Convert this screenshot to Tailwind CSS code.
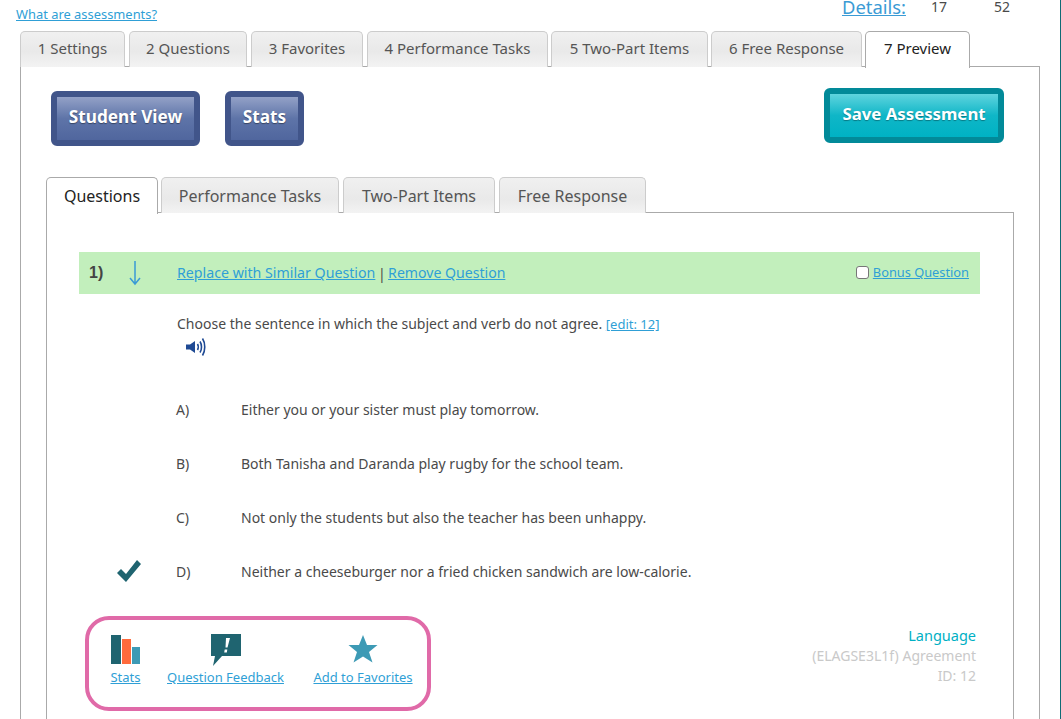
<!DOCTYPE html>
<html><head><meta charset="utf-8"><script src="https://cdn.jsdelivr.net/npm/@tailwindcss/browser@4"></script></head>
<body class="bg-white">
<div class="w-[1061px] h-[719px] overflow-hidden border-r border-[#0f6b75] font-['Noto_Sans',sans-serif] text-[#4a4a4a] text-[14px]">
  <div class="h-[31px] pl-4 pr-[50px] flex justify-between relative">
    <a class="text-[#2f9fd6] underline text-[12.9px] leading-none mt-[8px]">What are assessments?</a>
    <div class="flex items-start -mt-[3px] leading-[20px]">
      <a class="text-[#3a9bd5] underline text-[18.4px] leading-[20px]">Details:</a>
      <span class="ml-[25px] w-[63px]">17</span><span>52</span>
    </div>
  </div>
  <div class="ml-5 w-[1020px] relative">
    <div class="flex h-[36px] relative z-10 text-[15px] text-[#555]">
      <div class="w-[105px] pb-[3px] h-[36px] rounded-t-[5px] border border-b-0 border-[#ccc] bg-[linear-gradient(#f0f0f0,#e9e9e9_55%,#f3f3f3)] flex items-center justify-center">1 Settings</div>
      <div class="ml-[4px] w-[118px] pb-[3px] h-[36px] rounded-t-[5px] border border-b-0 border-[#ccc] bg-[linear-gradient(#f0f0f0,#e9e9e9_55%,#f3f3f3)] flex items-center justify-center">2 Questions</div>
      <div class="ml-[4px] w-[112px] pb-[3px] h-[36px] rounded-t-[5px] border border-b-0 border-[#ccc] bg-[linear-gradient(#f0f0f0,#e9e9e9_55%,#f3f3f3)] flex items-center justify-center">3 Favorites</div>
      <div class="ml-[4px] w-[181px] pb-[3px] h-[36px] rounded-t-[5px] border border-b-0 border-[#ccc] bg-[linear-gradient(#f0f0f0,#e9e9e9_55%,#f3f3f3)] flex items-center justify-center">4 Performance Tasks</div>
      <div class="ml-[3px] w-[157px] pb-[3px] h-[36px] rounded-t-[5px] border border-b-0 border-[#ccc] bg-[linear-gradient(#f0f0f0,#e9e9e9_55%,#f3f3f3)] flex items-center justify-center">5 Two-Part Items</div>
      <div class="ml-[3px] w-[151px] pb-[3px] h-[36px] rounded-t-[5px] border border-b-0 border-[#ccc] bg-[linear-gradient(#f0f0f0,#e9e9e9_55%,#f3f3f3)] flex items-center justify-center">6 Free Response</div>
      <div class="ml-[3px] w-[105px] h-[37px] pb-[4px] rounded-t-[5px] border border-b-0 border-[#aaa] bg-white text-[#222] flex items-center justify-center">7 Preview</div>
    </div>
    <div class="-mt-px border border-[#aaa] border-b-0 h-[700px] pl-[25px] pr-[25px]">
      <div class="flex justify-between items-start h-[110px]">
        <div class="flex gap-[25px] mt-[24px] ml-[5px]">
          <div class="w-[149px] h-[55px] pb-[4px] rounded-[6px] border-[6px] border-[#41558a] bg-[linear-gradient(#93a1c7,#5e74a8_50%,#50669e)] text-white font-bold text-[17.2px] flex items-center justify-center [text-shadow:0_1px_1px_#0006]">Student View</div>
          <div class="w-[79px] h-[55px] pb-[4px] rounded-[6px] border-[6px] border-[#41558a] bg-[linear-gradient(#93a1c7,#5e74a8_50%,#50669e)] text-white font-bold text-[17.2px] flex items-center justify-center [text-shadow:0_1px_1px_#0006]">Stats</div>
        </div>
        <div class="mt-[21px] mr-[10px] w-[180px] h-[55px] pb-[4px] rounded-[6px] border-[6px] border-[#028a99] bg-[linear-gradient(#5fd4de,#0fb6c7_50%,#00b2c4)] text-white font-bold text-[16.8px] flex items-center justify-center [text-shadow:0_1px_1px_#0005]">Save Assessment</div>
      </div>
      <div class="flex h-[36px] relative z-10 text-[16px] text-[#555]">
        <div class="w-[112px] h-[37px] rounded-t-[5px] border border-b-0 border-[#aaa] bg-white text-[#222] flex items-center justify-center">Questions</div>
        <div class="ml-[3px] w-[178px] h-[36px] rounded-t-[5px] border border-b-0 border-[#ccc] bg-[linear-gradient(#f0f0f0,#e9e9e9_60%,#f3f3f3)] flex items-center justify-center">Performance Tasks</div>
        <div class="ml-[4px] w-[152px] h-[36px] rounded-t-[5px] border border-b-0 border-[#ccc] bg-[linear-gradient(#f0f0f0,#e9e9e9_60%,#f3f3f3)] flex items-center justify-center">Two-Part Items</div>
        <div class="ml-[4px] w-[147px] h-[36px] rounded-t-[5px] border border-b-0 border-[#ccc] bg-[linear-gradient(#f0f0f0,#e9e9e9_60%,#f3f3f3)] flex items-center justify-center">Free Response</div>
      </div>
      <div class="-mt-px border border-[#aaa] border-b-0 h-[600px] pt-[39px] pl-[32px] w-[968px]">
        <div class="w-[901px] h-[42px] bg-[#c2efbc] flex items-center">
          <span class="w-[50px] pl-[10px] font-bold text-[#444] text-[16px] font-['Liberation_Sans',sans-serif]">1)</span>
          <svg class="w-[14px] h-[26px] mr-[34px]" viewBox="0 0 14 26" fill="none" stroke="#3a9bd5" stroke-width="1.5"><path d="M6 1V24M1 18L6 24L11 18"/></svg>
          <a class="text-[#2f9fd6] underline text-[14.2px]">Replace with Similar Question</a>
          <span class="mx-[2.5px]">|</span>
          <a class="text-[#2f9fd6] underline text-[14.1px]">Remove Question</a>
          <div class="ml-auto mr-[11px] flex items-center gap-[4px]">
            <span class="w-[13px] h-[13px] bg-white border border-[#777] rounded-[3px] -mt-[2px]"></span>
            <a class="text-[#2f9fd6] underline text-[12.8px]">Bonus Question</a>
          </div>
        </div>
        <div class="pl-[98px] pt-[21px] h-[88px]">
          <div class="leading-[18px]">Choose the sentence in which the subject and verb do not agree. <a class="text-[#2f9fd6] underline text-[13px]">[edit: 12]</a></div>
          <svg class="ml-[8px] mt-[3px] w-[22px] h-[22px]" viewBox="0 0 22 22" fill="none" stroke="#1f4a94" stroke-width="1.6"><path d="M1 8.5H5L10 5V17L5 13.5H1Z" fill="#1f4a94" stroke="none"/><path d="M12.5 8C13.5 9.5 13.5 12.5 12.5 14M15 5.5C17 8.5 17 13.5 15 16.5M17.5 2.5C20.5 7 20.5 15 17.5 19.5"/></svg>
        </div>
        <div class="grid grid-cols-[97px_65px_1fr] auto-rows-[54px] items-center">
          <span></span><span>A)</span><span>Either you or your sister must play tomorrow.</span>
          <span></span><span>B)</span><span>Both Tanisha and Daranda play rugby for the school team.</span>
          <span></span><span>C)</span><span>Not only the students but also the teacher has been unhappy.</span>
          <span class="pl-[37px]"><svg class="w-[26px] h-[24px]" viewBox="0 0 26 24"><path d="M1 14L5 10L10 15L21 1L25 5L10 23Z" fill="#1f6470"/></svg></span><span>D)</span><span>Neither a cheeseburger nor a fried chicken sandwich are low-calorie.</span>
        </div>
        <div class="flex justify-between w-[897px] mt-[18px]">
          <div class="ml-[6px] w-[346px] h-[95px] rounded-[24px] border-[4px] border-[#e06aa8] flex pt-[14px] text-[13px] text-[#2f9fd6] relative">
            <a class="ml-[21px] w-[31px] flex flex-col items-center">
              <svg class="w-[30px] h-[30px] shrink-0" viewBox="0 0 30 30"><path d="M0 1H10V30H0Z" fill="#1f6470"/><path d="M11 5H20V30H11Z" fill="#ff6a3c"/><path d="M21 13H29V30H21Z" fill="#3d9ab5"/></svg>
              <span class="underline mt-[4px] whitespace-nowrap">Stats</span>
            </a>
            <a class="ml-[26px] w-[117px] flex flex-col items-center">
              <svg class="w-[30px] h-[33px] shrink-0" viewBox="0 0 30 33"><path d="M0 0H30V22H11L2 32L4 22H0Z" fill="#1f6470"/><path d="M15 4H19L16.5 13.5H14.5Z M13.7 15.5H16.3L15.8 18.5H13.2Z" fill="#fff"/></svg>
              <span class="underline mt-[1px] whitespace-nowrap">Question Feedback</span>
            </a>
            <a class="ml-[29px] w-[100px] flex flex-col items-center">
              <svg class="w-[30px] h-[30px] shrink-0" viewBox="0 0 30 30"><path d="M15 1L19 11H29.5L21 18L24.5 28.5L15 22.5L5.5 28.5L9 18L.5 11H11Z" fill="#3d9ab5"/></svg>
              <span class="underline mt-[4px] whitespace-nowrap">Add to Favorites</span>
            </a>
          </div>
          <div class="text-right text-[#c9c9c9] leading-[20px] pt-[9px]">
            <div class="text-[#00b0c4] text-[14.5px] leading-[21px]">Language</div>
            <div>(ELAGSE3L1f) Agreement</div>
            <div>ID: 12</div>
          </div>
        </div>
      </div>
    </div>
  </div>
</div>
</body></html>
